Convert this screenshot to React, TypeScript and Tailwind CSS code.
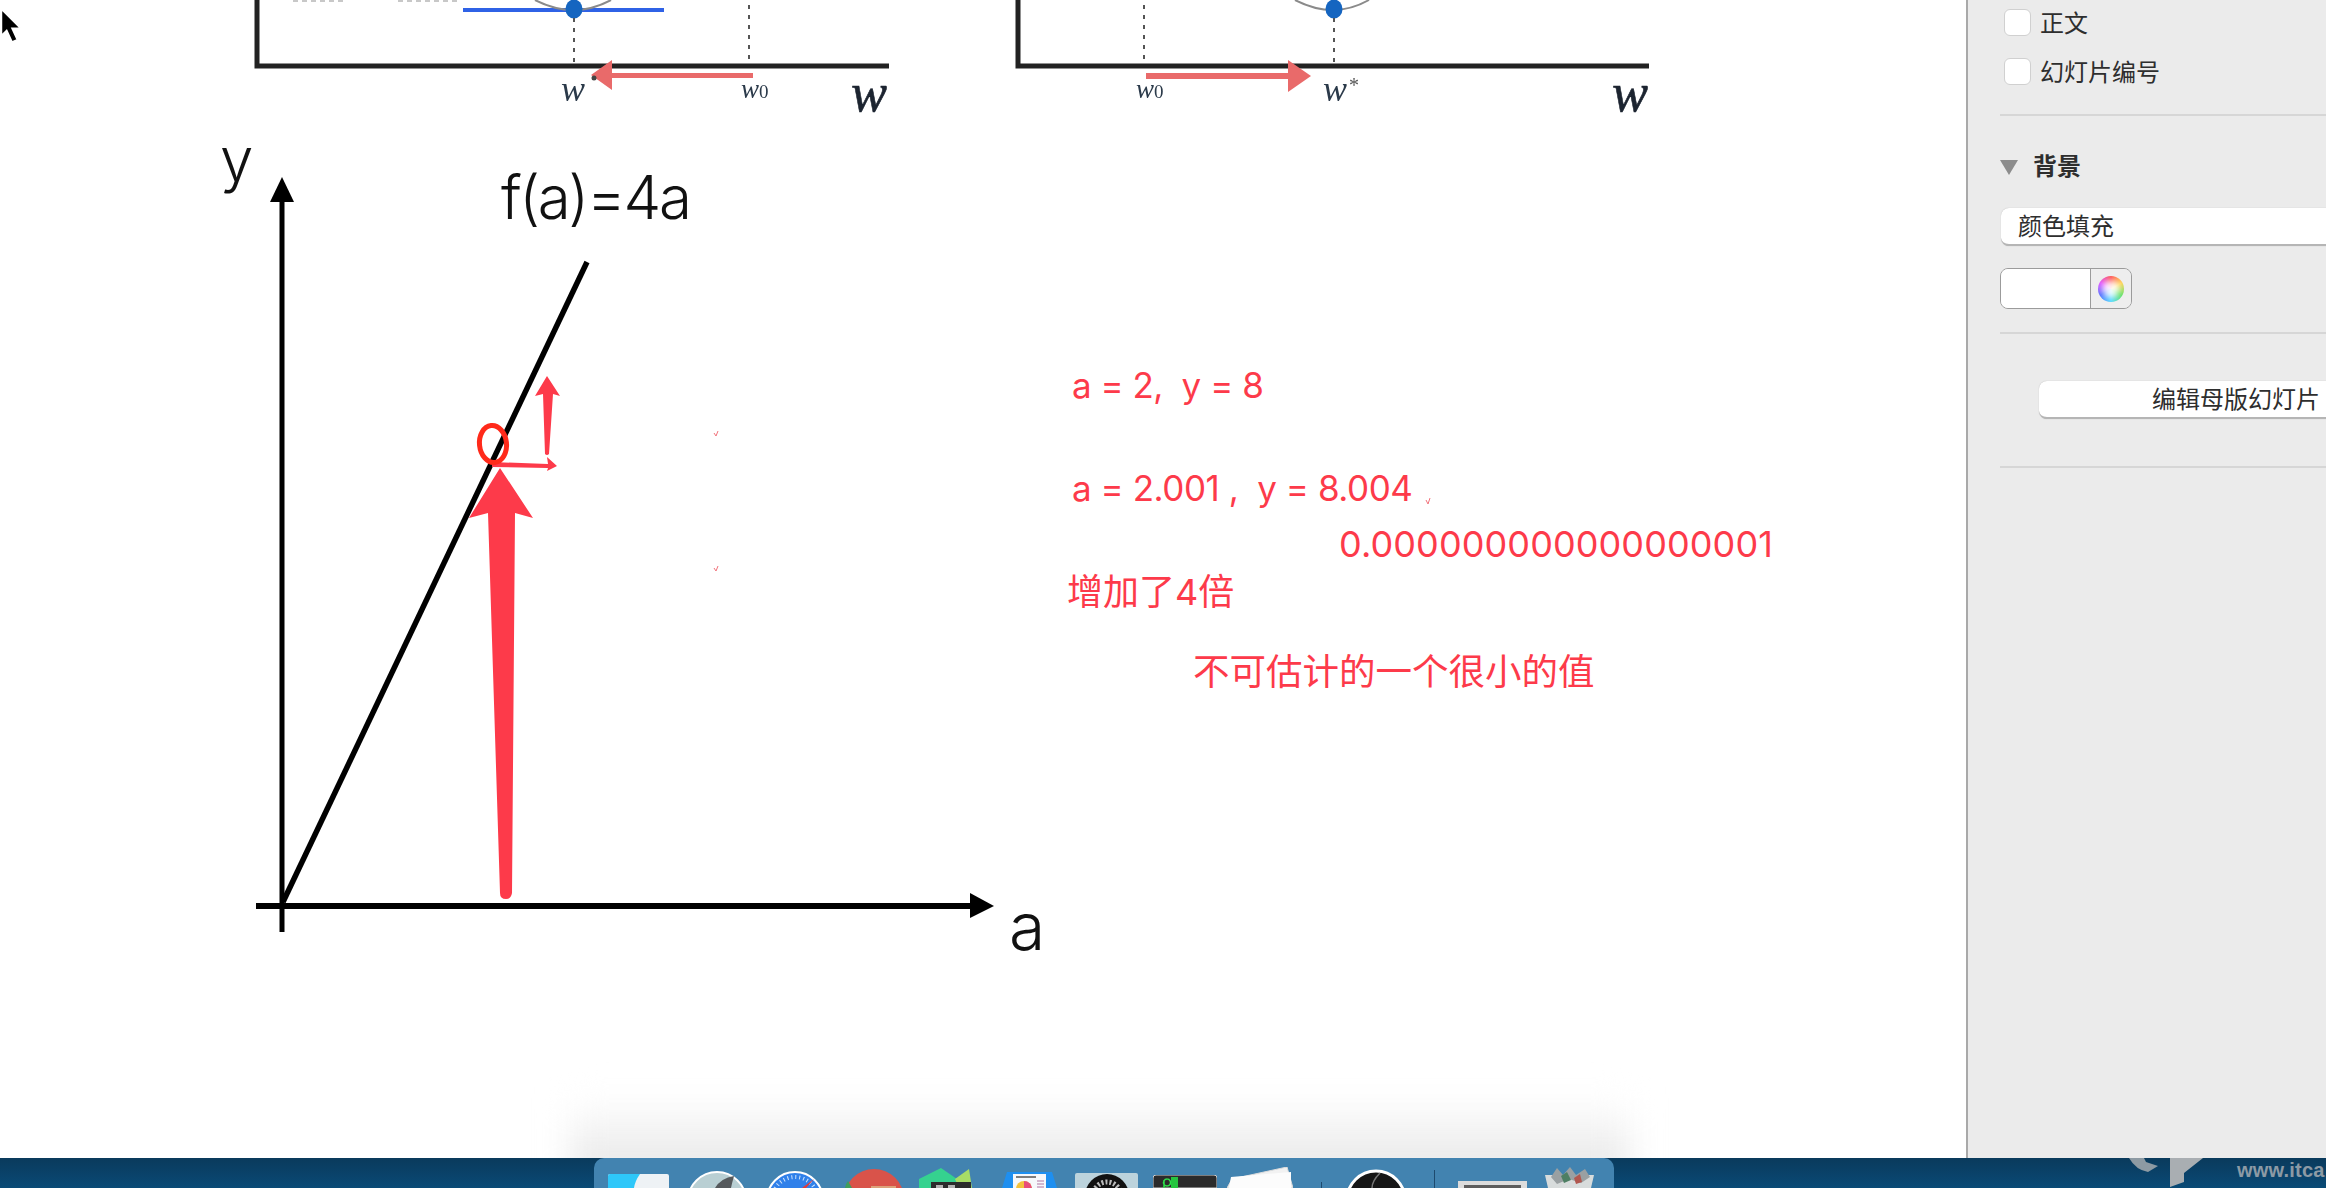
const sans = '[font-family:Inter,"Noto_Sans_CJK_SC",sans-serif]'

function MiniCharts() {
  return (
    <svg width="1966" height="130" className="absolute top-0 left-0 blur-[0.6px]">
      {/* left chart */}
      <path d="M257 0V66H889" fill="none" stroke="#222" strokeWidth="5" />
      <path d="M463 10H664" stroke="#2f62e6" strokeWidth="4" />
      <path d="M535 0Q574 20 611 0" fill="none" stroke="#8a8a8a" strokeWidth="2" />
      <ellipse cx="574" cy="9" rx="8.5" ry="9.5" fill="#1565c0" />
      <path d="M574 18V62M749 5V62" stroke="#555" strokeWidth="2" strokeDasharray="4 6" />
      <path d="M753 78H612V90L591 75L612 60V73H753Z" fill="#e96a6a" />
      <text x="561" y="101" className="font-['Liberation_Serif'] italic" fontSize="36" fill="#2b3a4a">w</text>
      <circle cx="594" cy="78" r="2.5" fill="#444" />
      <text x="741" y="98" className="font-['Liberation_Serif'] italic" fontSize="27" fill="#2b3a4a">w<tspan fontSize="19" fontStyle="normal">0</tspan></text>
      <text x="851" y="111" className="font-['Liberation_Serif'] italic" fontSize="54" fill="#1c2430" stroke="#1c2430" strokeWidth="0.6">w</text>
      {/* right chart */}
      <path d="M1018 0V66H1649" fill="none" stroke="#222" strokeWidth="5" />
      <path d="M1295 0Q1334 20 1369 0" fill="none" stroke="#8a8a8a" strokeWidth="2" />
      <ellipse cx="1334" cy="9" rx="8.5" ry="9.5" fill="#1565c0" />
      <path d="M1144 5V62M1334 18V62" stroke="#555" strokeWidth="2" strokeDasharray="4 6" />
      <path d="M1146 73H1288V60L1311 76L1288 92V79H1146Z" fill="#e96a6a" />
      <text x="1136" y="98" className="font-['Liberation_Serif'] italic" fontSize="27" fill="#2b3a4a">w<tspan fontSize="19" fontStyle="normal">0</tspan></text>
      <text x="1323" y="101" className="font-['Liberation_Serif'] italic" fontSize="36" fill="#2b3a4a">w</text>
      <text x="1349" y="92" className="font-['Liberation_Serif']" fontSize="20" fill="#555">*</text>
      <text x="1612" y="111" className="font-['Liberation_Serif'] italic" fontSize="54" fill="#1c2430" stroke="#1c2430" strokeWidth="0.6">w</text>
      {/* stubs of clipped labels */}
      <path d="M293 1H345M398 1H460" stroke="#c8c8c8" strokeWidth="2" strokeDasharray="5 4" />
    </svg>
  )
}

function MainChart() {
  return (
    <svg width="1966" height="1000" className="absolute top-0 left-0">
      <path d="M282 932V200" stroke="#000" strokeWidth="5" />
      <path d="M282 177L294 202H270Z" fill="#000" />
      <path d="M256 906H972" stroke="#000" strokeWidth="6" />
      <path d="M994 906L970 893V918Z" fill="#000" />
      <path d="M283 902L587 262" stroke="#000" strokeWidth="5.5" />
      <text x="220" y="181" className="font-['Inter'] font-light" fontSize="60" fill="#111">y</text>
      <text x="501" y="219" className="font-['Inter'] font-light" fontSize="60" letterSpacing="-2.4" fill="#111">f(a)=4a</text>
      <text x="1009" y="950" className="font-['Inter'] font-light" fontSize="66" fill="#111">a</text>
      {/* big arrow */}
      <path d="M500 468L533 518L515 513L512 893Q511 899 506 899Q500 899 500 893L488 513L469 518Z" fill="#fd3a4a" />
      {/* small up arrow */}
      <path d="M547 376L560 396L553 394L549 454Q547 456 545 454L543 394L535 396Z" fill="#fd3a4a" />
      {/* small right arrow */}
      <path d="M492 462L548 464L547 457L557 466L547 471L548 468L492 467Z" fill="#fd3a4a" />
      <ellipse cx="493" cy="444" rx="13.5" ry="18.5" fill="none" stroke="#ff2a1a" strokeWidth="5" transform="rotate(-6 493 444)" />
      {/* stray return marks */}
      <path d="M714 433L716 436L718 431M714 568L716 571L718 566M1426 500L1428 504L1430 498" fill="none" stroke="#f2737c" strokeWidth="1" />
    </svg>
  )
}

function Notes() {
  const note = `absolute whitespace-nowrap text-[#fd3a4a] leading-none ${sans}`
  return (
    <>
      <span className={`${note} left-[1072px] top-[368px] text-[35px] tracking-[-0.5px]`}>a = 2,&nbsp; y = 8</span>
      <span className={`${note} left-[1072px] top-[471px] text-[35px] tracking-[-0.45px]`}>a = 2.001 ,&nbsp; y = 8.004</span>
      <span className={`${note} left-[1339px] top-[526px] text-[36px] tracking-[0.1px]`}>0.000000000000000001</span>
      <span className={`${note} left-[1067px] top-[574px] text-[36px]`}>增加了4倍</span>
      <span className={`${note} left-[1193px] top-[654px] text-[36.5px]`}>不可估计的一个很小的值</span>
    </>
  )
}

function Cursor() {
  return (
    <svg width="24" height="38" viewBox="0 0 22 36" className="absolute top-[6px] left-0">
      <path d="M1 3L19 21H11L16 32L11 34L6 23L1 28Z" fill="#000" stroke="#fff" strokeWidth="1.5" />
    </svg>
  )
}

function Checkbox({ label }: { label: string }) {
  return (
    <div className="flex items-center gap-[9px] h-[27px] ml-[36px]">
      <div className="w-[27px] h-[27px] rounded-[6px] bg-white border border-[#d0d0d0]" />
      <span className="text-[24px] leading-none pt-[3px] text-[#2e2e2e]">{label}</span>
    </div>
  )
}

function Sidebar() {
  return (
    <aside className={`w-[360px] shrink-0 bg-[#ebebeb] border-l-2 border-[#a9a9a9] overflow-hidden ${sans}`}>
      <div className="pt-[9px] flex flex-col gap-[22px]">
        <Checkbox label="正文" />
        <Checkbox label="幻灯片编号" />
      </div>
      <div className="h-[2px] bg-[#d6d6d6] ml-[32px] mt-[29px]" />
      <div className="flex items-center ml-[32px] mt-[37px] h-[28px]">
        <svg width="18" height="15"><path d="M0 0H18L9 15Z" fill="#8c8c8c" /></svg>
        <span className="ml-[15px] text-[24px] leading-none font-bold text-[#2e2e2e]">背景</span>
      </div>
      <div className="ml-[33px] mt-[27px] w-[400px] h-[38px] rounded-[8px] bg-white border-b-2 border-[#b5b5b5] shadow-[0_0_1px_#aaa] flex items-center pl-[17px]">
        <span className="text-[24px] leading-none pt-[2px] text-[#2e2e2e]">颜色填充</span>
      </div>
      <div className="ml-[32px] mt-[22px] w-[132px] h-[41px] rounded-[8px] border border-[#9b9b9b] flex overflow-hidden">
        <div className="w-[90px] bg-white border-r border-[#9b9b9b]" />
        <div className="flex-1 flex items-center justify-center bg-[#eeeeee]">
          <div className="w-[26px] h-[26px] rounded-full bg-[conic-gradient(from_0deg,#ff4d4d,#ffd24d,#5ee05e,#4dd8ff,#4d6bff,#e04dff,#ff4d4d)] flex items-center justify-center">
            <div className="w-[18px] h-[18px] rounded-full bg-white/90 blur-[3px]" />
          </div>
        </div>
      </div>
      <div className="h-[2px] bg-[#d6d6d6] ml-[32px] mt-[23px]" />
      <div className="ml-[71px] mt-[47px] w-[400px] h-[38px] rounded-[8px] bg-white border-b-2 border-[#b5b5b5] shadow-[0_0_1px_#aaa] flex items-center pl-[113px]">
        <span className="text-[24px] leading-none pt-[2px] whitespace-nowrap text-[#2e2e2e]">编辑母版幻灯片</span>
      </div>
      <div className="h-[2px] bg-[#d6d6d6] ml-[32px] mt-[47px]" />
    </aside>
  )
}

function DockIcons() {
  return (
    <>
      {/* finder */}
      <svg width="61" height="14" className="ml-[14px] shrink-0">
        <path d="M2 0H59Q61 0 61 2V14H0V2Q0 0 2 0Z" fill="#eef2f5" />
        <path d="M2 0H32Q27 7 26 14H0V2Q0 0 2 0Z" fill="#2ec7f9" />
      </svg>
      {/* launchpad */}
      <svg width="60" height="17" className="ml-[18px] shrink-0">
        <circle cx="30" cy="30" r="29" fill="#b9cfd3" stroke="#fff" strokeWidth="2" />
        <path d="M28 17Q34 7 47 5Q45 12 44 17Z" fill="#55595c" />
      </svg>
      {/* safari */}
      <svg width="58" height="17" className="ml-[19px] shrink-0">
        <circle cx="29" cy="29" r="28" fill="#2f80ea" stroke="#fff" strokeWidth="2" />
        <circle cx="29" cy="29" r="23" fill="none" stroke="#cfe4fb" strokeWidth="4" strokeDasharray="1 3" />
        <path d="M48 8L40 17H36Z" fill="#e23a3a" />
      </svg>
      {/* red round icon */}
      <svg width="60" height="19" className="ml-[20px] shrink-0">
        <circle cx="30" cy="30" r="30" fill="#d9534a" />
        <path d="M1 19Q2 14 4 12L8 19Z" fill="#3f9d5c" />
        <path d="M27 19V17H52V19Z" fill="#dca27a" />
      </svg>
      {/* green ide icon */}
      <svg width="53" height="20" className="ml-[15px] shrink-0">
        <path d="M0 20V11L22 0L38 11V20Z" fill="#35d28f" />
        <path d="M36 11L50 1L53 20H40Z" fill="#a8dd66" />
        <path d="M12 14H52V20H12Z" fill="#2c2c2c" />
        <path d="M17 17H24V20H17ZM29 17H36V20H29Z" fill="#b4b4b4" />
      </svg>
      {/* keynote */}
      <svg width="55" height="16" className="ml-[30px] shrink-0">
        <path d="M5 0H50L55 16H0Z" fill="#1e8ff0" />
        <path d="M11 2H44V16H11Z" fill="#f6f8fb" />
        <path d="M14 5H34" stroke="#555" strokeWidth="1.5" />
        <circle cx="22" cy="17" r="8" fill="#f3c23c" />
        <path d="M22 17V9A8 8 0 0 1 30 17Z" fill="#e84d7a" />
        <path d="M35 9H42M35 12H42M35 15H42" stroke="#c8a0c0" strokeWidth="1.5" />
      </svg>
      {/* photo */}
      <svg width="63" height="15" className="ml-[18px] shrink-0">
        <path d="M2 0H61Q63 0 63 2V15H0V2Q0 0 2 0Z" fill="#bcd3dc" />
        <circle cx="32" cy="23" r="22" fill="#111" />
        <circle cx="32" cy="23" r="14" fill="none" stroke="#bbb" strokeWidth="5" strokeDasharray="2 2" />
      </svg>
      {/* terminal */}
      <svg width="64" height="13" className="ml-[15px] shrink-0">
        <path d="M3 0H61Q64 0 64 3V13H0V3Q0 0 3 0Z" fill="#2b2b2b" stroke="#cfcfcf" strokeWidth="1" />
        <path d="M14 4A3.5 3.5 0 1 0 14.1 4M11 13V5" fill="none" stroke="#2de04a" strokeWidth="1.5" />
        <path d="M18 2H25V13H18Z" fill="#25c43f" />
      </svg>
      {/* papers */}
      <svg width="66" height="21" className="ml-[10px] shrink-0">
        <path d="M5 12L60 0L66 21H0Z" fill="#f2f2f2" stroke="#dcdcdc" />
        <path d="M4 10L64 5V21H2Z" fill="#fcfcfc" />
      </svg>
      <div className="ml-[28px] w-px h-[6px] bg-[#1d4a6e] shrink-0" />
      {/* black oval app */}
      <svg width="61" height="19" className="ml-[24px] shrink-0">
        <circle cx="30" cy="31" r="29" fill="#161616" stroke="#fff" strokeWidth="3" />
        <path d="M34 4Q26 12 26 19" fill="none" stroke="#777" strokeWidth="1.5" />
      </svg>
      <div className="ml-[27px] w-px h-[18px] bg-[#1d4a6e] shrink-0" />
      {/* screenshot window */}
      <svg width="69" height="7" className="ml-[23px] shrink-0">
        <path d="M0 0H69V7H0Z" fill="#dcdcdc" />
        <path d="M6 4H63V7H6Z" fill="#5d5d5d" />
      </svg>
      {/* trash */}
      <svg width="53" height="21" className="ml-[16px] shrink-0">
        <path d="M2 8L51 8L48 21H5Z" fill="#d8dcdc" />
        <path d="M8 10L14 1L20 8L27 0L33 8L42 2L47 10L38 16L26 12L14 17Z" fill="#9aa0a2" />
        <path d="M18 9L24 5L28 13L21 16Z" fill="#4e7f63" />
        <path d="M31 11L37 7L39 15L33 17Z" fill="#b1574f" />
      </svg>
    </>
  )
}

function Dock() {
  return (
    <div className="relative h-[30px] shrink-0 bg-gradient-to-b from-[#0a3a5c] to-[#094a76] overflow-hidden">
      <div className="absolute top-0 left-[594px] w-[1020px] h-full rounded-t-[10px] bg-[#4283b0] flex items-end">
        <DockIcons />
      </div>
      <svg width="80" height="30" className="absolute top-0 left-[2128px]">
        <path d="M1 0Q8 12 20 14L30 8L18 4L16 0Z" fill="#8d9aa3" />
        <path d="M42 0H75L56 15V24L42 29Z" fill="#a9aeb2" />
      </svg>
      <span className="absolute top-[1px] left-[2237px] whitespace-nowrap text-[20px] tracking-[0.2px] leading-[22px] font-bold text-[#8c9aa5] font-['Liberation_Sans',sans-serif]">
        www.itca
      </span>
    </div>
  )
}

export default function App() {
  return (
    <div className="w-[2326px] h-[1188px] flex flex-col overflow-hidden bg-white">
      <div className="flex flex-1 min-h-0">
        <main className="relative flex-1 bg-white overflow-hidden">
          <MiniCharts />
          <MainChart />
          <Notes />
          <Cursor />
          <div className="absolute left-[570px] bottom-[-20px] w-[1060px] h-[80px] bg-gradient-to-b from-white to-[#e4e4e4] blur-[16px]" />
        </main>
        <Sidebar />
      </div>
      <Dock />
    </div>
  )
}
